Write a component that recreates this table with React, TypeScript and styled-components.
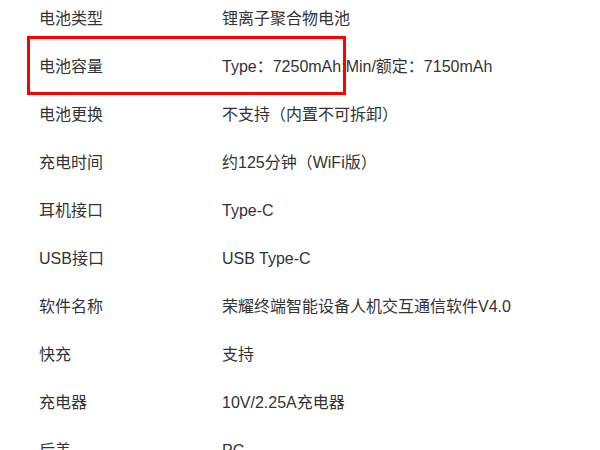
import React from "react";
import styled, { createGlobalStyle } from "styled-components";

const Global = createGlobalStyle`
  html, body { margin: 0; padding: 0; background: #ffffff; }
  body {
    width: 600px;
    height: 450px;
    overflow: hidden;
    font-family: "Liberation Sans", Arial, "Noto Sans CJK SC", sans-serif;
  }
`;

const Page = styled.div`
  position: relative;
  width: 600px;
  height: 450px;
  overflow: hidden;
  background: #fff;
`;

const Table = styled.div`
  display: flex;
  flex-direction: column;
  margin-top: -5px;
  padding-left: 39px;
`;

const Row = styled.div`
  display: grid;
  grid-template-columns: 183px 1fr;
  height: 48px;
  line-height: 48px;
  font-size: 16px;
  color: #333333;
  white-space: nowrap;
`;

const Label = styled.span``;
const Value = styled.span``;

const Highlight = styled.div`
  position: absolute;
  left: 27px;
  top: 36px;
  width: 319px;
  height: 59px;
  box-sizing: border-box;
  border: 3px solid #ff0000;
  pointer-events: none;
`;

const rows: [string, string][] = [
  ["电池类型", "锂离子聚合物电池"],
  ["电池容量", "Type：7250mAh;Min/额定：7150mAh"],
  ["电池更换", "不支持（内置不可拆卸）"],
  ["充电时间", "约125分钟（WiFi版）"],
  ["耳机接口", "Type-C"],
  ["USB接口", "USB Type-C"],
  ["软件名称", "荣耀终端智能设备人机交互通信软件V4.0"],
  ["快充", "支持"],
  ["充电器", "10V/2.25A充电器"],
  ["后盖", "PC"],
];

export default function App() {
  return (
    <Page>
      <Global />
      <Table>
        {rows.map(([l, v]) => (
          <Row key={l}>
            <Label>{l}</Label>
            <Value>{v}</Value>
          </Row>
        ))}
      </Table>
      <Highlight />
    </Page>
  );
}
